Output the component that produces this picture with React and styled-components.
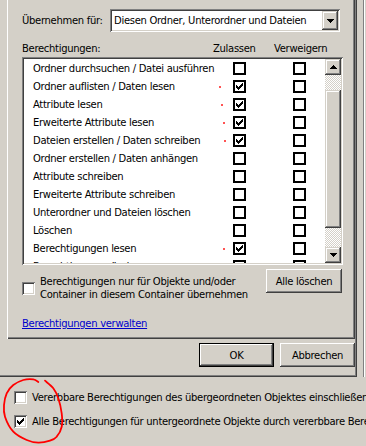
import React from 'react';
import styled, { createGlobalStyle, css } from 'styled-components';

const GlobalStyle = createGlobalStyle`
  html, body { margin: 0; padding: 0; background: #d4d0c8; }
  body { font-family: "DejaVu Sans", Tahoma, sans-serif; font-size: 10px; letter-spacing: -0.3px; color: #000; }
  #root { width: 366px; height: 446px; overflow: hidden; }
`;

const raised = css`
  background: #d4d0c8;
  box-shadow: inset -1px -1px #404040, inset 1px 1px #ffffff, inset -2px -2px #808080, inset 2px 2px #d4d0c8;
`;
const raisedScroll = css`
  background: #d4d0c8;
  box-shadow: inset -1px -1px #404040, inset 1px 1px #d4d0c8, inset -2px -2px #808080, inset 2px 2px #ffffff;
`;
const sunken = css`
  box-shadow: inset 1px 1px #808080, inset -1px -1px #ffffff, inset 2px 2px #404040, inset -2px -2px #d4d0c8;
`;

const Screen = styled.div`
  position: relative;
  width: 366px;
  height: 446px;
  display: grid;
  grid-template-columns: 357px 9px;
  grid-template-rows: 377px 69px;
  background: #d4d0c8;
  overflow: hidden;
`;

const Dialog = styled.section`
  grid-column: 1;
  grid-row: 1;
  display: flex;
  flex-direction: column;
  padding: 0 2px 0 7px;
  box-shadow: inset -1px -1px #404040, inset -2px -2px #808080;
`;

const Panel = styled.div`
  height: 339px;
  box-sizing: border-box;
  padding: 9px 0 0 15px;
  box-shadow: inset 1px 0 #ffffff, inset -1px -1px #404040, inset -2px -2px #808080;
  display: flex;
  flex-direction: column;
`;

const ApplyRow = styled.div`
  display: flex;
  align-items: center;
  height: 23px;
`;

const FieldLabel = styled.span`
  width: 88px;
`;

const Combo = styled.div`
  width: 230px;
  height: 23px;
  box-sizing: border-box;
  padding: 2px;
  background: #fff;
  ${sunken};
  display: flex;
  align-items: stretch;
`;

const ComboText = styled.span`
  flex: 1;
  padding-left: 2px;
  display: flex;
  align-items: center;
`;

const DropButton = styled.span`
  width: 16px;
  ${raisedScroll};
  display: flex;
  align-items: center;
  justify-content: center;
`;

const HeaderRow = styled.div`
  margin-top: 9px;
  height: 14px;
  display: grid;
  grid-template-columns: 191px 61px auto;
  align-items: center;
`;

const ListView = styled.div`
  margin-top: 2px;
  width: 321px;
  height: 208px;
  box-sizing: border-box;
  padding: 2px;
  background: #fff;
  ${sunken};
  display: flex;
`;

const Rows = styled.div`
  flex: 1;
  overflow: hidden;
`;

const Row = styled.div`
  position: relative;
  height: 18px;
  display: grid;
  grid-template-columns: 200px 13px 47px 13px;
  align-items: center;
  padding-left: 9px;
  white-space: nowrap;
`;

const Mark = styled.span`
  position: absolute;
  top: 9px;
  width: 2px;
  height: 2px;
  border-radius: 1px;
  background: #ff1a1a;
`;

const ListCheck = styled.span`
  width: 13px;
  height: 13px;
  box-sizing: border-box;
  border: 2px solid #000;
  background: #fff;
  display: flex;
  align-items: center;
  justify-content: center;
`;

const ScrollBar = styled.div`
  width: 16px;
  display: flex;
  flex-direction: column;
`;

const ScrollArrow = styled.div`
  height: 16px;
  ${raisedScroll};
  display: flex;
  align-items: center;
  justify-content: center;
`;

const Track = styled.div`
  height: ${p => p.$h}px;
  background-image: conic-gradient(#ffffff 25%, #d4d0c8 0 50%, #ffffff 0 75%, #d4d0c8 0);
  background-size: 2px 2px;
`;

const Thumb = styled.div`
  flex: 1;
  ${raisedScroll};
`;

const BottomRow = styled.div`
  margin-top: 4px;
  display: flex;
  justify-content: space-between;
  align-items: flex-start;
  width: 320px;
`;

const InheritOption = styled.label`
  margin-top: 6px;
  display: flex;
  align-items: center;
  gap: 5px;
  line-height: 13px;
`;

const Check3D = styled.span`
  flex: none;
  width: 13px;
  height: 13px;
  box-sizing: border-box;
  background: #fff;
  ${sunken};
  display: flex;
  align-items: center;
  justify-content: center;
`;

const Button = styled.button`
  font: inherit;
  letter-spacing: inherit;
  color: #000;
  width: ${p => p.$w || 75}px;
  height: 24px;
  border: none;
  padding: 0;
  ${raised};
  ${p => p.$default && css`
    box-shadow: inset 0 0 0 1px #000, inset -2px -2px #404040, inset 2px 2px #ffffff, inset -3px -3px #808080;
  `}
`;

const Link = styled.a`
  margin-top: 16px;
  line-height: 13px;
  color: #0000cc;
  text-decoration: underline;
  align-self: flex-start;
`;

const ButtonBar = styled.div`
  margin-top: 4px;
  display: flex;
  justify-content: flex-end;
  gap: 6px;
`;

const RightStrip = styled.div`
  grid-column: 2;
  grid-row: 1;
  padding-left: 6px;
  display: flex;
`;

const StripLine = styled.div`
  width: 1px;
  background: #808080;
  box-shadow: 1px 0 #ffffff;
`;

const BackArea = styled.div`
  grid-column: 1 / 3;
  grid-row: 2;
  padding: 14px 0 0 14px;
  display: flex;
  flex-direction: column;
  gap: 11px;
  overflow: hidden;
`;

const BackOption = styled.label`
  display: flex;
  align-items: center;
  gap: 5px;
  height: 13px;
  white-space: nowrap;
`;

const Scribble = styled.svg`
  position: absolute;
  left: 0;
  top: 376px;
  pointer-events: none;
`;

const Tick = () => (
  <svg width="7" height="7" viewBox="0 0 7 7" shapeRendering="crispEdges">
    <path d="M0 2h1v1h1v1h1V3h1V2h1V1h1V0h1v3H6v1H5v1H4v1H3v1H2V6H1V5H0z" fill="#000" />
  </svg>
);

const Arrow = ({ down }) => (
  <svg width="7" height="4" viewBox="0 0 7 4" shapeRendering="crispEdges">
    <path d={down ? 'M0 0h7L3.5 4z' : 'M3.5 0L7 4H0z'} fill="#000" />
  </svg>
);

const permissions = [
  { label: 'Ordner durchsuchen / Datei ausführen', allow: false },
  { label: 'Ordner auflisten / Daten lesen', allow: true, mark: 195 },
  { label: 'Attribute lesen', allow: true, mark: 197 },
  { label: 'Erweiterte Attribute lesen', allow: true, mark: 199 },
  { label: 'Dateien erstellen / Daten schreiben', allow: true, mark: 200 },
  { label: 'Ordner erstellen / Daten anhängen', allow: false },
  { label: 'Attribute schreiben', allow: false },
  { label: 'Erweiterte Attribute schreiben', allow: false },
  { label: 'Unterordner und Dateien löschen', allow: false },
  { label: 'Löschen', allow: false },
  { label: 'Berechtigungen lesen', allow: true, mark: 199 },
  { label: 'Berechtigungen ändern', allow: false },
];

const circlePts = [
  [45, 4.7], [53.3, 12.3], [58.3, 22.3], [61.7, 37.3], [61.7, 50.7], [56.7, 60.7],
  [50, 64.7], [38.3, 66.7], [26.7, 64], [13.3, 55.7], [5, 40.7], [4, 29],
  [6.7, 17.3], [13.3, 9], [23.3, 4], [33.3, 3.3], [38.3, 6],
];

function smoothPath(pts) {
  let d = `M${pts[0][0]},${pts[0][1]}`;
  for (let i = 0; i < pts.length - 1; i++) {
    const p0 = pts[i - 1] || pts[i];
    const p1 = pts[i];
    const p2 = pts[i + 1];
    const p3 = pts[i + 2] || p2;
    const c1 = [p1[0] + (p2[0] - p0[0]) / 6, p1[1] + (p2[1] - p0[1]) / 6];
    const c2 = [p2[0] - (p3[0] - p1[0]) / 6, p2[1] - (p3[1] - p1[1]) / 6];
    d += ` C${c1[0].toFixed(1)},${c1[1].toFixed(1)} ${c2[0].toFixed(1)},${c2[1].toFixed(1)} ${p2[0]},${p2[1]}`;
  }
  return d;
}

export default function App() {
  return (
    <>
      <GlobalStyle />
      <Screen>
        <Dialog>
          <Panel>
            <ApplyRow>
              <FieldLabel>Übernehmen für:</FieldLabel>
              <Combo>
                <ComboText>Diesen Ordner, Unterordner und Dateien</ComboText>
                <DropButton><Arrow down /></DropButton>
              </Combo>
            </ApplyRow>
            <HeaderRow>
              <span>Berechtigungen:</span>
              <span>Zulassen</span>
              <span>Verweigern</span>
            </HeaderRow>
            <ListView>
              <Rows>
                {permissions.map(p => (
                  <Row key={p.label}>
                    <span>{p.label}</span>
                    {p.mark && <Mark style={{ left: p.mark }} />}
                    <ListCheck>{p.allow && <Tick />}</ListCheck>
                    <span />
                    <ListCheck />
                  </Row>
                ))}
              </Rows>
              <ScrollBar>
                <ScrollArrow><Arrow /></ScrollArrow>
                <Track $h={15} />
                <Thumb />
                <Track $h={19} />
                <ScrollArrow><Arrow down /></ScrollArrow>
              </ScrollBar>
            </ListView>
            <BottomRow>
              <InheritOption>
                <Check3D />
                <span>Berechtigungen nur für Objekte und/oder<br />Container in diesem Container übernehmen</span>
              </InheritOption>
              <Button $w={76}>Alle löschen</Button>
            </BottomRow>
            <Link href="#">Berechtigungen verwalten</Link>
          </Panel>
          <ButtonBar>
            <Button $default>OK</Button>
            <Button>Abbrechen</Button>
          </ButtonBar>
        </Dialog>
        <RightStrip>
          <StripLine />
        </RightStrip>
        <BackArea>
          <BackOption>
            <Check3D />
            <span>Vererbbare Berechtigungen des übergeordneten Objektes einschließen</span>
          </BackOption>
          <BackOption>
            <Check3D><Tick /></Check3D>
            <span>Alle Berechtigungen für untergeordnete Objekte durch vererbbare Berechtigungen ersetzen</span>
          </BackOption>
        </BackArea>
        <Scribble width="70" height="70" viewBox="0 0 70 70">
          <path d={smoothPath(circlePts)} fill="none" stroke="#ff0000" strokeWidth="1.8" strokeLinecap="round" strokeLinejoin="round" />
        </Scribble>
      </Screen>
    </>
  );
}
